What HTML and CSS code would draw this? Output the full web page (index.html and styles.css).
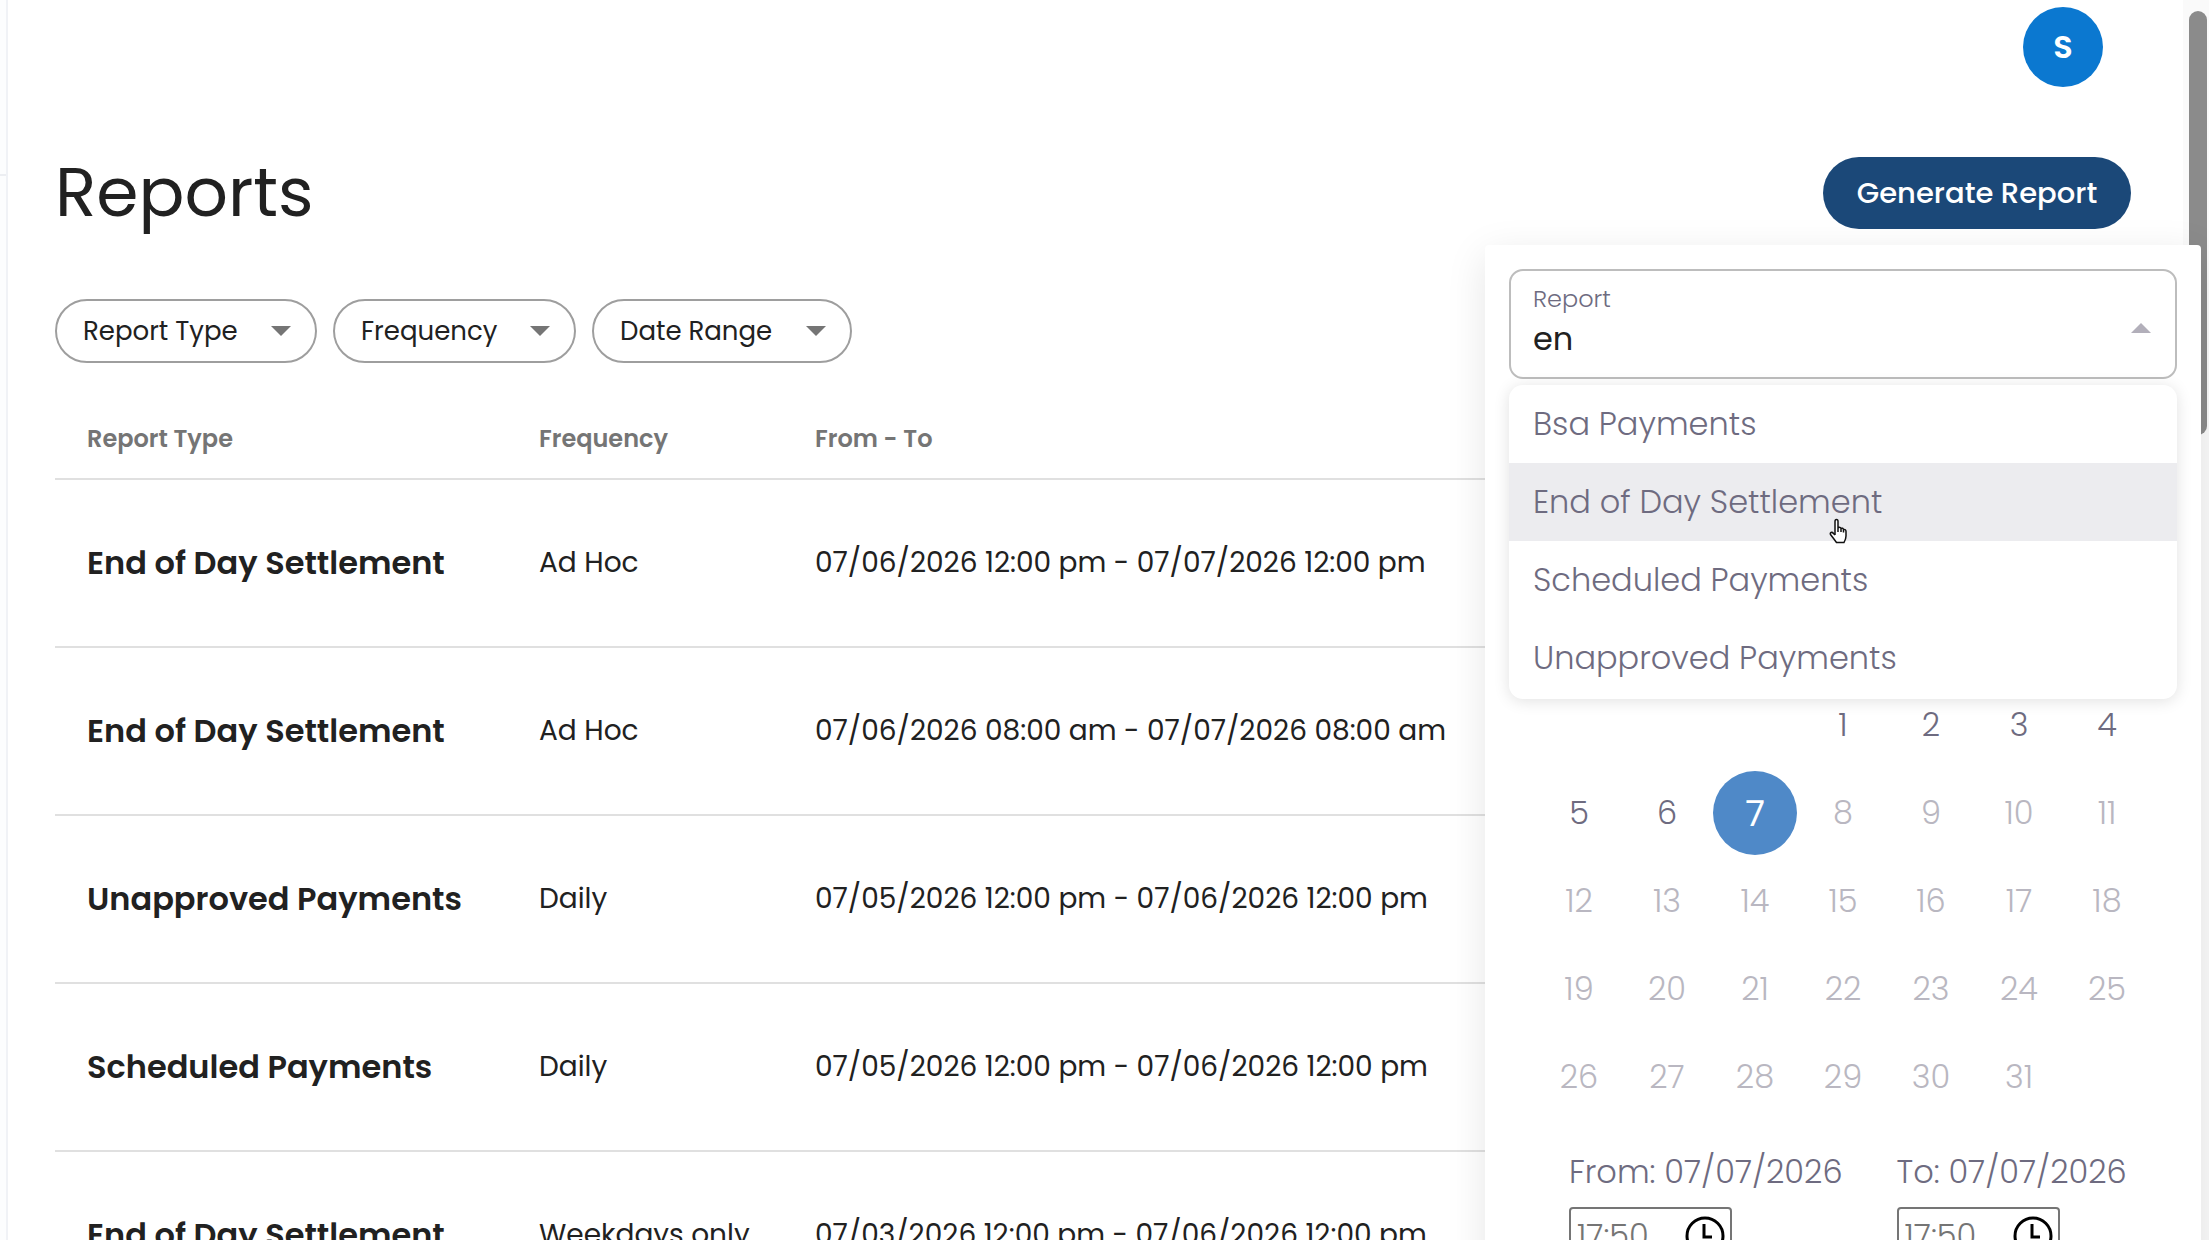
FILE: index.html
```html
<!DOCTYPE html>
<html lang="en">
<head>
<meta charset="UTF-8">
<title>Reports</title>
<link rel="stylesheet" href="styles.css">
</head>
<body>

  <div class="sidebar-edge"></div>

  <main class="page">
    <header class="topbar">
      <button class="avatar" type="button">S</button>
    </header>

    <div class="page-heading">
      <h1>Reports</h1>
      <div class="generate">
        <button class="generate-button" type="button">Generate Report</button>

        <!-- Generate report popover -->
        <form class="popover">
          <div class="field">
            <label for="report">Report</label>
            <input id="report" type="text" value="en" autocomplete="off">
            <svg class="caret-up" viewBox="0 0 20 10"><path d="M0 10 10 0l10 10z"/></svg>
            <ul class="options">
              <li>Bsa Payments</li>
              <li class="active">End of Day Settlement
                <svg class="pointer" viewBox="0 0 18 26"><path d="M6 17V3.500Q6 1.500 7.500 1.500T9 3.500V10Q11.500 8.500 12 10.500 14 9.500 14.500 11.500 17 11 17 13.500V18Q17 21 15 24.500H7.500Q5 21 1.500 16.500C0.500 14.500 3 13.500 4.500 15.500L6 17M9 10v4M12 10.500v3.500M14.500 11.500v3"/></svg>
              </li>
              <li>Scheduled Payments</li>
              <li>Unapproved Payments</li>
            </ul>
          </div>

          <table class="calendar">
            <tbody>
              <tr><td></td><td></td><td></td><td><button type="button">1</button></td><td><button type="button">2</button></td><td><button type="button">3</button></td><td><button type="button">4</button></td></tr>
              <tr><td><button type="button">5</button></td><td><button type="button">6</button></td><td><button class="selected" type="button">7</button></td><td><button type="button" disabled>8</button></td><td><button type="button" disabled>9</button></td><td><button type="button" disabled>10</button></td><td><button type="button" disabled>11</button></td></tr>
              <tr><td><button type="button" disabled>12</button></td><td><button type="button" disabled>13</button></td><td><button type="button" disabled>14</button></td><td><button type="button" disabled>15</button></td><td><button type="button" disabled>16</button></td><td><button type="button" disabled>17</button></td><td><button type="button" disabled>18</button></td></tr>
              <tr><td><button type="button" disabled>19</button></td><td><button type="button" disabled>20</button></td><td><button type="button" disabled>21</button></td><td><button type="button" disabled>22</button></td><td><button type="button" disabled>23</button></td><td><button type="button" disabled>24</button></td><td><button type="button" disabled>25</button></td></tr>
              <tr><td><button type="button" disabled>26</button></td><td><button type="button" disabled>27</button></td><td><button type="button" disabled>28</button></td><td><button type="button" disabled>29</button></td><td><button type="button" disabled>30</button></td><td><button type="button" disabled>31</button></td><td></td></tr>
            </tbody>
          </table>

          <div class="times">
            <div class="time">
              <label for="from">From: 07/07/2026</label>
              <div class="time-box">
                <input id="from" type="text" value="17:50">
                <svg class="clock" viewBox="0 0 40 40"><circle cx="20" cy="20" r="18"/><path d="M19 8v13h8"/></svg>
              </div>
            </div>
            <div class="time">
              <label for="to">To: 07/07/2026</label>
              <div class="time-box">
                <input id="to" type="text" value="17:50">
                <svg class="clock" viewBox="0 0 40 40"><circle cx="20" cy="20" r="18"/><path d="M19 8v13h8"/></svg>
              </div>
            </div>
          </div>
        </form>
      </div>
    </div>

    <div class="filters">
      <button class="filter report-type" type="button">Report Type <svg class="caret" viewBox="0 0 20 10"><path d="M0 0h20L10 10z"/></svg></button>
      <button class="filter frequency" type="button">Frequency <svg class="caret" viewBox="0 0 20 10"><path d="M0 0h20L10 10z"/></svg></button>
      <button class="filter date-range" type="button">Date Range <svg class="caret" viewBox="0 0 20 10"><path d="M0 0h20L10 10z"/></svg></button>
    </div>

    <table class="reports">
      <thead>
        <tr>
          <th class="col-type">Report Type</th>
          <th class="col-frequency">Frequency</th>
          <th>From - To</th>
        </tr>
      </thead>
      <tbody>
        <tr>
          <td class="name">End of Day Settlement</td>
          <td>Ad Hoc</td>
          <td>07/06/2026 12:00 pm - 07/07/2026 12:00 pm</td>
        </tr>
        <tr>
          <td class="name">End of Day Settlement</td>
          <td>Ad Hoc</td>
          <td>07/06/2026 08:00 am - 07/07/2026 08:00 am</td>
        </tr>
        <tr>
          <td class="name">Unapproved Payments</td>
          <td>Daily</td>
          <td>07/05/2026 12:00 pm - 07/06/2026 12:00 pm</td>
        </tr>
        <tr>
          <td class="name">Scheduled Payments</td>
          <td>Daily</td>
          <td>07/05/2026 12:00 pm - 07/06/2026 12:00 pm</td>
        </tr>
        <tr>
          <td class="name">End of Day Settlement</td>
          <td>Weekdays only</td>
          <td>07/03/2026 12:00 pm - 07/06/2026 12:00 pm</td>
        </tr>
      </tbody>
    </table>
  </main>

  <div class="scrollbar"><div class="thumb"></div></div>

</body>
</html>
```
FILE: styles.css
```css
:root {
  --text: #212121;
  --muted: #757575;
  --slate: #6e6b80;
  --navy: #1b4878;
  --avatar-blue: #0b78d0;
  --selected-blue: #4f89c8;
  --line: #e0e0e0;
}

* {
  box-sizing: border-box;
}

body {
  margin: 0;
  height: 100vh;
  display: flex;
  overflow: hidden;
  background: #fff;
  color: var(--text);
  font-family: 'Poppins', 'Inter', sans-serif;
  font-size: 28px;
}

button,
input {
  font: inherit;
  color: inherit;
}

button {
  padding: 0;
  border: none;
  background: none;
  cursor: pointer;
}

.sidebar-edge {
  width: 8px;
  border-right: 2px solid #f0f2f6;
  background: linear-gradient(#eceef2, #eceef2) 0 174px / 6px 2px no-repeat #fcfdfe;
}

.page {
  flex: 1;
  min-width: 0;
  padding: 7px 52px 0 47px;
}

.topbar {
  display: flex;
  justify-content: flex-end;
  padding-right: 28px;
}

.avatar {
  width: 80px;
  height: 80px;
  border-radius: 50%;
  background: var(--avatar-blue);
  color: #fff;
  font-size: 32px;
  font-weight: 600;
}

.page-heading {
  display: flex;
  justify-content: space-between;
  align-items: center;
  height: 72px;
  margin-top: 70px;
}

h1 {
  margin: 0;
  font-size: 68px;
  font-weight: 400;
}

.generate {
  position: relative;
}

.generate-button {
  width: 308px;
  height: 72px;
  border-radius: 36px;
  background: var(--navy);
  color: #fff;
  font-size: 29px;
  font-weight: 500;
}

.filters {
  display: flex;
  gap: 16px;
  margin-top: 70px;
}

.filter {
  display: flex;
  justify-content: space-between;
  align-items: center;
  height: 64px;
  padding: 0 24px 0 26px;
  border: 2px solid #9e9e9e;
  border-radius: 32px;
  font-size: 26px;
}

.report-type {
  width: 262px;
}

.frequency {
  width: 243px;
}

.date-range {
  width: 260px;
}

.caret {
  width: 20px;
  height: 10px;
  fill: var(--muted);
}

/* Reports table */
.reports {
  width: 100%;
  margin-top: 36px;
  border-collapse: collapse;
  table-layout: fixed;
}

.reports th,
.reports td {
  padding: 0 32px;
  border-bottom: 2px solid var(--line);
  text-align: left;
  white-space: nowrap;
}

.reports th {
  height: 80px;
  color: var(--muted);
  font-size: 24px;
  font-weight: 600;
}

.reports td {
  height: 168px;
}

.reports .name {
  font-size: 32px;
  font-weight: 600;
}

.col-type {
  width: 452px;
}

.col-frequency {
  width: 276px;
}

/* Popover */
.popover {
  position: absolute;
  top: 88px;
  right: -70px;
  z-index: 2;
  width: 716px;
  padding: 24px;
  border-radius: 4px;
  background: #fff;
  box-shadow: 0 10px 40px rgba(0, 0, 0, 0.1);
  color: var(--slate);
  font-size: 32px;
  font-weight: 300;
}

.field {
  position: relative;
  display: flex;
  flex-direction: column;
  height: 110px;
  padding: 12px 22px;
  border: 2px solid #bdbdbd;
  border-radius: 14px;
}

.field label {
  font-size: 24px;
  line-height: 32px;
}

.field input {
  width: 90%;
  height: 48px;
  padding: 0;
  border: none;
  outline: none;
  color: var(--text);
  font-weight: 400;
}

.caret-up {
  position: absolute;
  top: 52px;
  right: 24px;
  width: 20px;
  height: 10px;
  fill: #b2afba;
}

.options {
  position: absolute;
  top: 114px;
  left: -2px;
  right: -2px;
  margin: 0;
  padding: 0 0 2px;
  overflow: hidden;
  border-radius: 14px;
  background: #fff;
  box-shadow: 0 2px 16px rgba(0, 0, 0, 0.12);
  list-style: none;
}

.options li {
  position: relative;
  height: 78px;
  padding: 0 24px;
  line-height: 78px;
}

.options .active {
  background: #ececef;
}

.pointer {
  position: absolute;
  top: 55px;
  left: 320px;
  width: 18px;
  height: 26px;
  fill: #fff;
  stroke: #111;
  stroke-width: 1.500;
}

.calendar {
  margin: 302px auto 0;
  border-collapse: collapse;
}

.calendar td {
  width: 88px;
  height: 88px;
  padding: 0;
  text-align: center;
}

.calendar button {
  width: 84px;
  height: 84px;
  border-radius: 50%;
}

.calendar button:disabled {
  color: #b9b7c1;
}

.calendar .selected {
  background: var(--selected-blue);
  color: #fff;
  font-size: 36px;
  font-weight: 400;
}

.times {
  display: grid;
  grid-template-columns: 1fr 1fr;
  gap: 54px;
  padding: 32px 36px 0 60px;
}

.time label {
  display: block;
  line-height: 38px;
  white-space: nowrap;
}

.time-box {
  display: flex;
  align-items: center;
  width: 163px;
  height: 58px;
  margin-top: 16px;
  padding: 0 5px 0 6px;
  border: 2px solid #757575;
  border-radius: 4px;
}

.time-box input {
  width: 100px;
  padding: 0;
  border: none;
  color: #757575;
}

.clock {
  width: 40px;
  height: 40px;
  margin-left: auto;
  fill: none;
  stroke: #000;
  stroke-width: 3;
}

/* Page scrollbar */
.scrollbar {
  width: 26px;
  padding: 11px 2px 0 6px;
  background: #fafafa;
}

.thumb {
  height: 424px;
  border-radius: 9px;
  background: #8b8b8b;
}
```
